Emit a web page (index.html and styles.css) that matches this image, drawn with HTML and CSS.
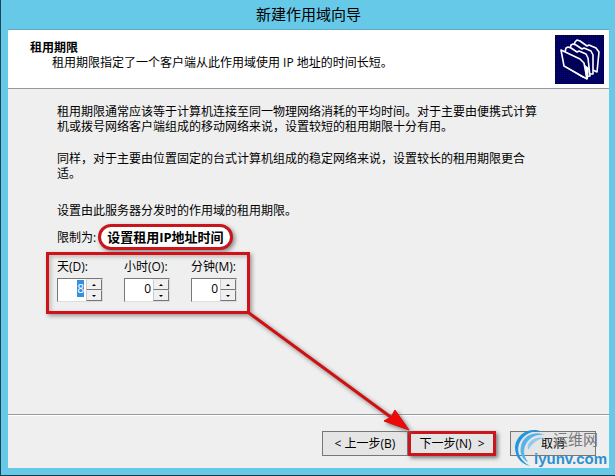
FILE: index.html
```html
<!DOCTYPE html>
<html lang="zh-CN">
<head>
    <meta charset="UTF-8">
    <meta name="viewport" content="width=device-width, initial-scale=1.0">
    <title>新建作用域向导</title>
    <link rel="stylesheet" href="styles.css">
</head>
<body>
    <div class="window">
        <div class="titlebar">新建作用域向导</div>
        <form class="dialog">
            <header class="banner">
                <div class="banner-text">
                    <h1>租用期限</h1>
                    <p>租用期限指定了一个客户端从此作用域使用 IP 地址的时间长短。</p>
                </div>
                <svg class="banner-icon" viewBox="0 0 49 49" aria-hidden="true">
                    <defs>
                        <pattern id="dither" width="2" height="2" patternUnits="userSpaceOnUse">
                            <rect width="2" height="2" fill="#000078"/>
                            <rect width="1" height="1" fill="#000018"/>
                        </pattern>
                    </defs>
                    <rect width="49" height="49" fill="url(#dither)"/>
                    <g fill="#000058" stroke="#fff" stroke-width="1.6" stroke-linejoin="round">
                        <path d="M19 11L20 7L22 5L25 6L32 11L34 10L41 13L44 17L42 37L38 35L25 28Z"/>
                        <path d="M15 14L16 10L18 9L21 10L27 14L29 13L36 16L38 20L38 39L33 39L20 31Z"/>
                        <path d="M10 17L11 13L13 12L16 13L22 17L24 16L31 19L33 23L35 41L28 42L15 34Z"/>
                        <path d="M6 15L25 24L29 28L32 44L9 31Z"/>
                    </g>
                    <path d="M30 30L34 33L33 44L31 44Z" fill="#fff"/>
                </svg>
            </header>

            <main class="content">
                <p>租用期限通常应该等于计算机连接至同一物理网络消耗的平均时间。对于主要由便携式计算机或拨号网络客户端组成的移动网络来说，设置较短的租用期限十分有用。</p>
                <p>同样，对于主要由位置固定的台式计算机组成的稳定网络来说，设置较长的租用期限更合适。</p>
                <p class="prompt">设置由此服务器分发时的作用域的租用期限。</p>
                <div class="limit">
                    <span>限制为:</span>
                    <strong class="callout">设置租用IP地址时间</strong>
                </div>
                <div class="duration">
                    <div class="field">
                        <label for="days">天(D):</label>
                        <div class="spinner">
                            <input id="days" type="text" value="8">
                            <button type="button" class="up" aria-label="增加天数"></button>
                            <button type="button" class="down" aria-label="减少天数"></button>
                        </div>
                    </div>
                    <div class="field">
                        <label for="hours">小时(O):</label>
                        <div class="spinner">
                            <input id="hours" type="text" value="0">
                            <button type="button" class="up" aria-label="增加小时"></button>
                            <button type="button" class="down" aria-label="减少小时"></button>
                        </div>
                    </div>
                    <div class="field">
                        <label for="minutes">分钟(M):</label>
                        <div class="spinner">
                            <input id="minutes" type="text" value="0">
                            <button type="button" class="up" aria-label="增加分钟"></button>
                            <button type="button" class="down" aria-label="减少分钟"></button>
                        </div>
                    </div>
                    <svg class="arrow" viewBox="0 0 164 120" aria-hidden="true">
                        <path d="M1 1L144 106" stroke="#d01010" stroke-width="3"/>
                        <path d="M161 118L136 109L143 105L147 98Z" fill="#f00808" stroke="#d01010"/>
                    </svg>
                </div>
            </main>

            <footer class="actions">
                <button type="button">&lt; 上一步(B)</button>
                <button type="button" class="next">下一步(N) &nbsp;&gt;</button>
                <button type="button" class="cancel">取消</button>
                <div class="watermark">
                    <svg class="swirl" viewBox="0 0 38 40" aria-hidden="true">
                        <path d="M31 4C18-2 4 6 3 19C3 29 9 36 18 38C9 33 4 25 7 16C11 6 21 1 31 4Z" fill="#2196dc"/>
                        <path d="M33 7C22 2 11 8 9 18C7 27 12 33 16 34C13 30 10 23 14 16C18 9 25 6 33 7Z" fill="#58b4e8"/>
                        <path d="M34 11C26 7 18 12 16 17C15 19 16 21 17 22C17 20 19 17 22 15C25 12 29 10 34 11Z" fill="#8ccbee"/>
                    </svg>
                    <span class="site-name">运维网</span>
                    <span class="site-url">iyunv.com</span>
                </div>
            </footer>
        </form>
    </div>
    <script>
        document.getElementById('days').select();
    </script>
</body>
</html>
```
FILE: styles.css
```css
* {
    box-sizing: border-box;
}

body {
    margin: 0;
    font-family: "Open Sans", "Noto Sans CJK SC", sans-serif;
    font-size: 12px;
    line-height: 15px;
    color: #000;
}

h1, p {
    margin: 0;
}

.window {
    display: flex;
    flex-direction: column;
    min-height: 100vh;
    padding: 0 6px 7px 7px;
    background: #66c9e8;
    border-left: 1px solid #17485a;
    border-bottom: 1px solid #17384a;
}

.titlebar {
    height: 29px;
    font-size: 15px;
    line-height: 29px;
    text-align: center;
}

.dialog {
    flex: 1;
    display: flex;
    flex-direction: column;
    background: #efefef;
    border-top: 1px solid #62a9bd;
}

.banner {
    display: flex;
    justify-content: space-between;
    height: 59px;
    padding: 5px 5px 4px 22px;
    background: #fff;
    border-bottom: 1px solid #999;
}

.banner-text {
    padding-top: 5px;
}

.banner h1 {
    font-size: 12px;
    line-height: 15px;
}

.banner p {
    padding-left: 22px;
}

.banner-icon {
    width: 49px;
    height: 49px;
}

.content {
    flex: 1;
    padding: 15px 66px 0 49px;
}

.content p {
    margin-bottom: 17px;
}

.content .prompt {
    padding-top: 5px;
    margin-bottom: 6px;
}

.limit {
    display: flex;
    align-items: center;
    gap: 2px;
}

.callout {
    height: 26px;
    padding: 0 6px;
    font-size: 13px;
    line-height: 20px;
    background: #fff;
    border: 3px solid #c8161c;
    border-radius: 13px;
    box-shadow: 2px 2px 4px #888;
}

.duration {
    position: relative;
    z-index: 1;
    display: flex;
    gap: 21px;
    width: 204px;
    height: 62px;
    margin: 2px 0 0 -11px;
    padding: 4px 0 0 8px;
    border: 3px solid #d01218;
    box-shadow: 2px 2px 4px #999, inset 2px 2px 4px #bbb;
}

.field {
    width: 46px;
    white-space: nowrap;
}

.field label {
    display: block;
    margin-bottom: 4px;
}

.spinner {
    display: grid;
    grid-template-columns: 1fr 16px;
    grid-template-rows: 11px 11px;
    width: 46px;
    background: #fff;
    border: 1px solid;
    border-color: #777 #ddd #ddd #777;
}

.spinner input {
    grid-row: span 2;
    width: 100%;
    height: 20px;
    padding: 0 2px 2px 0;
    font: inherit;
    text-align: right;
    background: none;
    border: 0;
    outline: 0;
}

.spinner input::selection {
    color: #fff;
    background: #3390e0;
}

.spinner button {
    display: flex;
    align-items: center;
    justify-content: center;
    padding: 0;
    background: #f0f0f0;
    border: 1px solid;
    border-color: #eee #777 #777 #ccc;
}

.spinner button::before {
    content: "";
    border: 2px solid transparent;
}

.spinner .up::before {
    border-top: 0;
    border-bottom-color: #000;
}

.spinner .down::before {
    border-bottom: 0;
    border-top-color: #000;
}

/* runs from the duration box to the next button */
.arrow {
    position: absolute;
    left: 199px;
    top: 57px;
    width: 164px;
    height: 120px;
    filter: drop-shadow(2px 2px 2px #777);
    pointer-events: none;
}

.actions {
    position: relative;
    display: flex;
    justify-content: flex-end;
    align-items: flex-start;
    height: 54px;
    padding: 16px 13px 0 0;
    border-top: 1px solid #999;
    box-shadow: inset 0 1px #fff;
}

.actions button {
    width: 86px;
    height: 25px;
    padding: 0;
    font: inherit;
    color: #000;
    background: #e5e5e5;
    border: 1px solid #777;
}

.actions .next {
    width: 88px;
    border: 3px solid #c8161c;
    box-shadow: 2px 2px 4px #777;
}

.actions .cancel {
    margin-left: 14px;
}

.watermark {
    position: absolute;
    right: 0;
    bottom: 0;
    isolation: isolate;
    display: grid;
    grid-template-columns: 22px 1fr;
    width: 97px;
    height: 40px;
    pointer-events: none;
}

.swirl {
    position: absolute;
    z-index: -1;
    left: 0;
    top: 0;
    width: 38px;
    height: 40px;
}

.site-name {
    grid-column: 2;
    padding-left: 19px;
    font-size: 15px;
    line-height: 22px;
    color: #777;
}

.site-url {
    grid-column: 2;
    font-family: "Liberation Sans", sans-serif;
    font-size: 15px;
    font-weight: bold;
    line-height: 18px;
    color: #2b8fd0;
}
```
